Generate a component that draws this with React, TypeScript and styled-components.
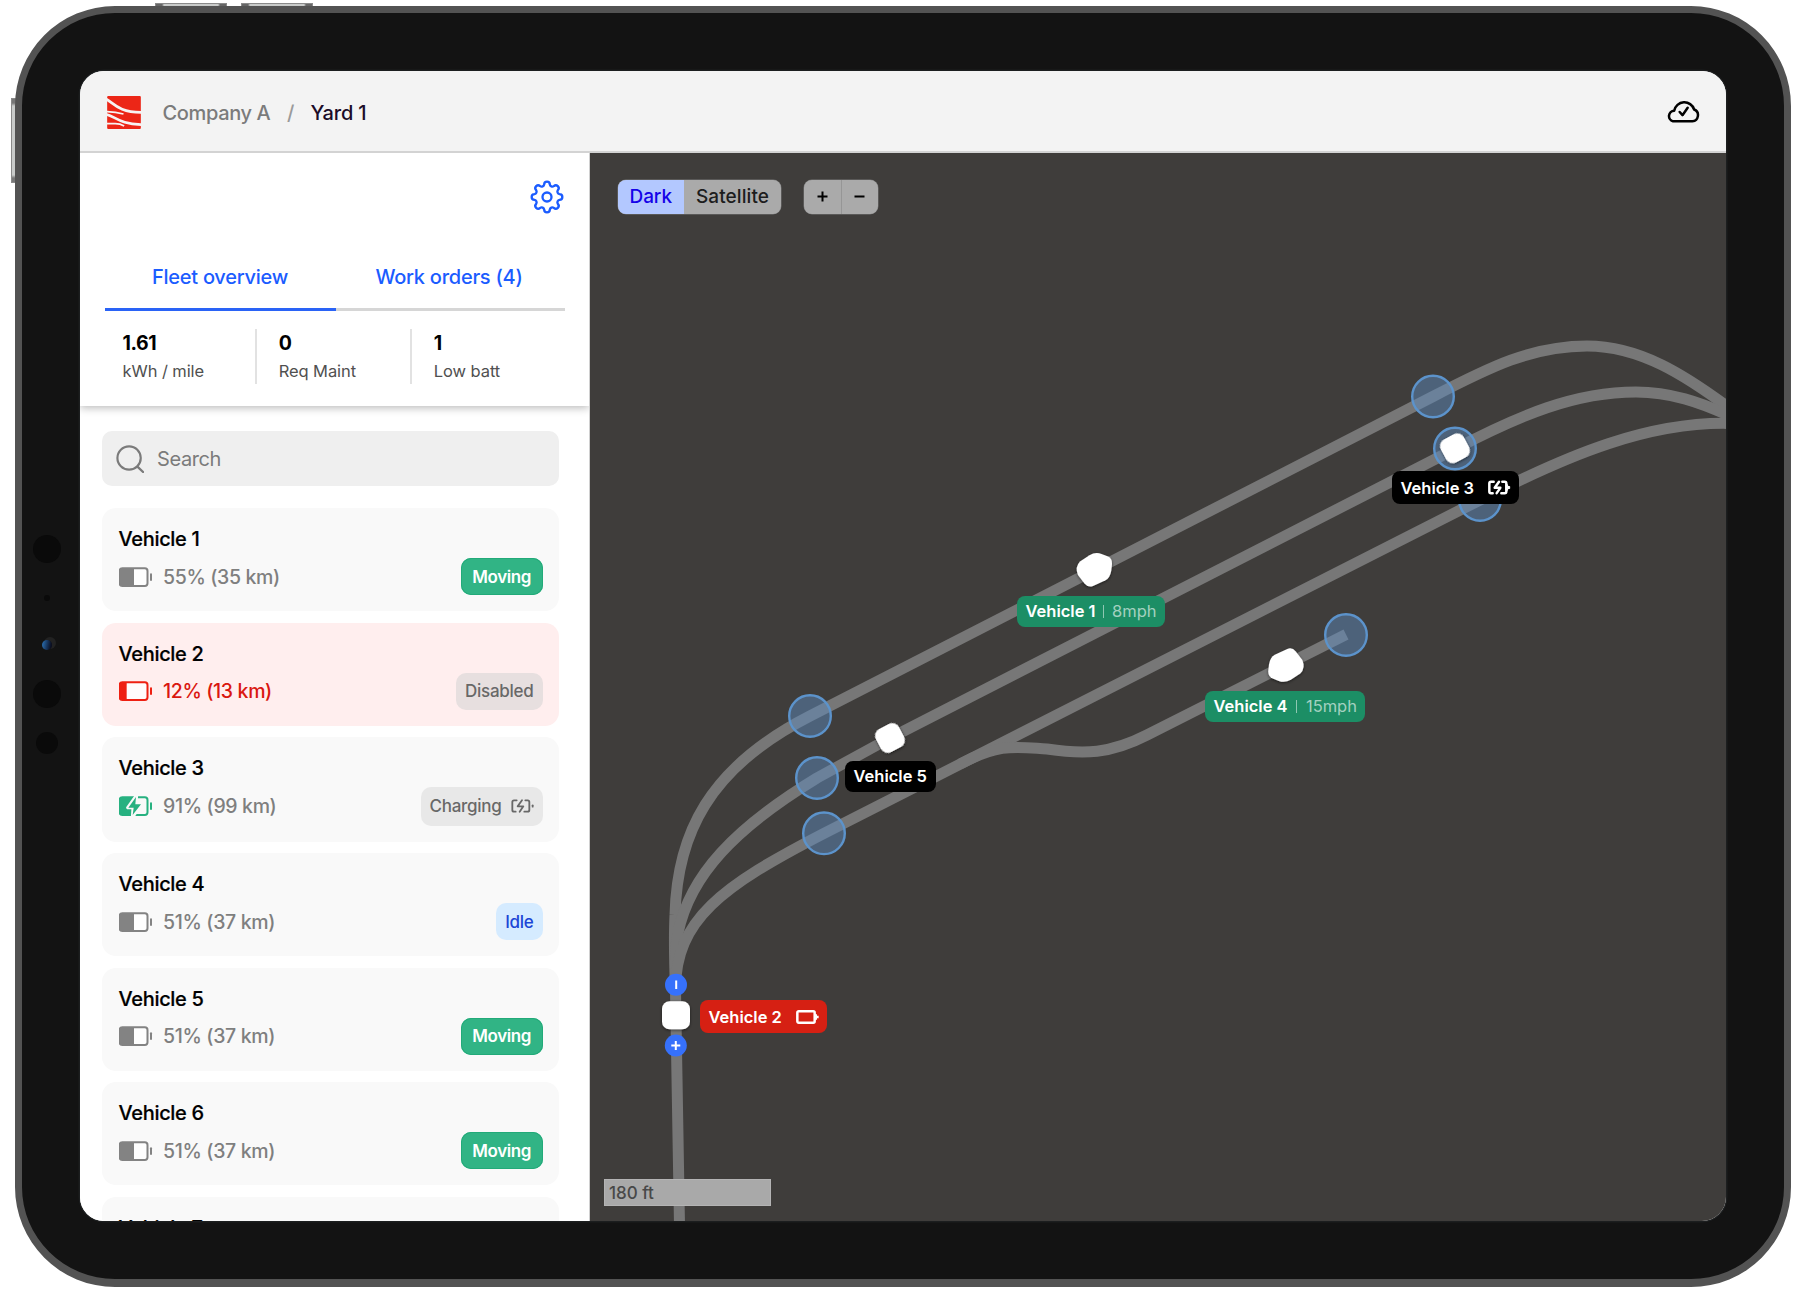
import React from "react";
import styled, { createGlobalStyle } from "styled-components";

const GlobalStyle = createGlobalStyle`
  *, *::before, *::after { box-sizing: border-box; }
  body {
    margin: 0;
    background: #fff;
    font-family: Inter, "Liberation Sans", sans-serif;
    overflow: hidden;
  }
  button { font: inherit; letter-spacing: inherit; border: 0; margin: 0; padding: 0; background: none; }
`;

/* ---------- Tablet ---------- */

const Page = styled.div`
  position: relative;
  width: 1800px;
  height: 1295px;
  padding: 6px 9px 8px 15px;
  overflow: hidden;
`;

const Tablet = styled.div`
  position: relative;
  width: 1776px;
  height: 1281px;
  padding: 58px;
  background: #131313;
  border: 7px solid #535353;
  border-bottom-width: 8px;
  border-radius: 100px;
`;

const Screen = styled.div`
  display: flex;
  flex-direction: column;
  width: 1646px;
  height: 1150px;
  border-radius: 24px;
  overflow: hidden;
  background: #fff;
  box-shadow: 0 0 0 1.5px #1c1e1f;
`;

const SideKey = styled.div<{ $x: number; $y: number; $w: number; $h: number }>`
  position: absolute;
  left: ${(p) => p.$x}px;
  top: ${(p) => p.$y}px;
  width: ${(p) => p.$w}px;
  height: ${(p) => p.$h}px;
  border: 1px solid #8a8a8a;
  background: ${(p) =>
    p.$w > p.$h
      ? "linear-gradient(90deg, #666 0 6px, #c9cbca 8px calc(100% - 8px), #666 calc(100% - 6px))"
      : "linear-gradient(#777 0 4px, #c9cbca 7px calc(100% - 7px), #777 calc(100% - 4px))"};
`;

const Lens = styled.div<{ $y: number; $size: number; $blue?: boolean }>`
  position: absolute;
  left: ${(p) => 24.5 - p.$size / 2}px;
  top: ${(p) => p.$y - p.$size / 2}px;
  width: ${(p) => p.$size}px;
  height: ${(p) => p.$size}px;
  border-radius: 50%;
  background: ${(p) =>
    p.$blue ? "linear-gradient(100deg, #2868a8 10%, #17365f 50%, #0b0f22 85%)" : "#0a0a0a"};
  ${(p) => p.$blue && "box-shadow: 3px -2px 0 1px #222;"}
`;

/* ---------- Top bar ---------- */

const TopBar = styled.header`
  display: flex;
  align-items: center;
  flex: none;
  height: 82px;
  padding: 2px 26px 0 27px;
  background: #f3f3f3;
  border-bottom: 2px solid #d3d3d3;
`;

const Crumbs = styled.nav`
  display: flex;
  align-items: center;
  margin: 1px 0 0 21.5px;
  gap: 16.5px;
  font-size: 20px;
  font-weight: 500;
  line-height: 24px;
  letter-spacing: -0.36px;
  color: #7b7b7b;
`;

const Slash = styled.span`
  color: #9a9a9a;
`;

const Current = styled.span`
  color: #1c0c28;
  letter-spacing: -0.2px;
`;

const Push = styled.div`
  margin: -2px 0 0 auto;
  display: flex;
`;

/* ---------- Sidebar ---------- */

const Body = styled.div`
  display: flex;
  flex: 1;
  min-height: 0;
`;

const Sidebar = styled.aside`
  display: flex;
  flex-direction: column;
  flex: none;
  width: 510px;
  background: #fff;
  border-right: 1px solid #d0d0d0;
  overflow: hidden;
`;

const Summary = styled.section`
  flex: none;
  height: 253px;
  padding: 26.5px 24px 0 25px;
  box-shadow: 0 2px 8px rgba(0, 0, 0, 0.27);
`;

const Settings = styled.button`
  display: flex;
  margin: 0 1.5px 0 auto;
  width: 34px;
  height: 34px;
`;

const Tabs = styled.div`
  display: flex;
  margin-top: 39.5px;
`;

const Tab = styled.button<{ $active?: boolean }>`
  flex: ${(p) => (p.$active ? "0 0 231px" : "1")};
  height: 58px;
  padding: 0 ${(p) => (p.$active ? 1 : 3)}px 7px 0;
  color: #1b5cff;
  font-size: 20px;
  font-weight: 500;
  letter-spacing: -0.25px;
  border-bottom: 3px solid ${(p) => (p.$active ? "#2a63f6" : "#d6d6d6")};
`;

const Stats = styled.dl`
  display: flex;
  margin: 18px 0 0;
`;

const Stat = styled.div`
  display: flex;
  flex-direction: column;
  width: 156.5px;
  height: 55px;
  padding: 3px 0 0 22px;
  &:first-child {
    width: 151px;
    padding-left: 17.5px;
  }
  & + & {
    border-left: 2px solid #e2e2e2;
  }
`;

const StatValue = styled.dd`
  margin: 0;
  order: 0;
  font-size: 19.5px;
  font-weight: 700;
  line-height: 23px;
  letter-spacing: -0.4px;
  color: #000;
`;

const StatLabel = styled.dt`
  order: 1;
  margin-top: 6px;
  font-size: 16.5px;
  line-height: 20px;
  letter-spacing: -0.08px;
  color: #505050;
`;

const List = styled.div`
  display: flex;
  flex-direction: column;
  flex: 1;
  min-height: 0;
  padding: 25px 30px 0 22px;
  overflow: hidden;
`;

const SearchBox = styled.div`
  display: flex;
  align-items: center;
  flex: none;
  height: 55px;
  margin-bottom: 22px;
  padding-left: 13.5px;
  gap: 13px;
  border-radius: 10px;
  background: #efefef;
  color: #7b7b7b;
  font-size: 20px;
  letter-spacing: -0.4px;
`;

const Card = styled.article<{ $alert?: boolean }>`
  flex: none;
  padding: 17px 16.5px 16px;
  margin-bottom: 11.5px;
  border-radius: 14px;
  background: ${(p) => (p.$alert ? "#ffeeee" : "#f9f9f9")};
`;

const CardTitle = styled.h3`
  margin: 0;
  font-size: 20px;
  font-weight: 500;
  line-height: 28px;
  height: 33px;
  color: #000;
  letter-spacing: -0.32px;
  -webkit-text-stroke: 0.2px #000;
`;

const CardRow = styled.div`
  display: flex;
  align-items: center;
  min-height: 37px;
`;

const Charge = styled.span<{ $color: string }>`
  margin-left: 10.5px;
  font-size: 19.5px;
  font-weight: 500;
  letter-spacing: -0.35px;
  color: ${(p) => p.$color};
`;

const tones = {
  green: { bg: "#31b485", fg: "#ffffff", edge: "#22aa79", pad: 11.5 },
  grey: { bg: "#e8e8e8", fg: "#686868", edge: "transparent", pad: 9 },
  muted: { bg: "#e7dfdf", fg: "#686868", edge: "transparent", pad: 9 },
  blue: { bg: "#d5ebff", fg: "#1c46d6", edge: "transparent", pad: 9 },
};
type Tone = keyof typeof tones;

const Badge = styled.span<{ $tone: Tone; $tall?: boolean }>`
  display: flex;
  align-items: center;
  gap: 9px;
  margin-left: auto;
  height: ${(p) => (p.$tall ? 38.5 : 37)}px;
  padding: 0 ${(p) => tones[p.$tone].pad}px;
  border-radius: 10px;
  background: ${(p) => tones[p.$tone].bg};
  box-shadow: inset 0 0 0 1px ${(p) => tones[p.$tone].edge};
  color: ${(p) => tones[p.$tone].fg};
  font-size: 17px;
  font-weight: ${(p) => (p.$tone === "green" ? 600 : 500)};
  letter-spacing: ${(p) => (p.$tone === "green" ? -0.4 : -0.28)}px;
`;

/* ---------- Map ---------- */

const MapArea = styled.main`
  position: relative;
  flex: 1;
  background: #3f3d3b;
  overflow: hidden;
`;

const Tracks = styled.svg`
  display: block;
  width: 1136px;
  height: 1068px;
`;

const Controls = styled.div`
  position: absolute;
  left: 27.5px;
  top: 26.5px;
  display: flex;
  gap: 22.5px;
`;

const Segments = styled.div`
  display: flex;
  height: 34.5px;
  border-radius: 8px;
  overflow: hidden;
  background: #aaa;
  box-shadow: 0 0 0 0.5px #777;
`;

const Segment = styled.button<{ $active?: boolean; $w: number }>`
  width: ${(p) => p.$w}px;
  font-size: 19px;
  font-weight: 500;
  letter-spacing: ${(p) => (p.$active ? -0.1 : 0.1)}px;
  color: ${(p) => (p.$active ? "#1503e8" : "#1d1d1d")};
  background: ${(p) => (p.$active ? "#b3c8ff" : "transparent")};
`;

const Zoom = styled.button`
  display: flex;
  align-items: center;
  justify-content: center;
  width: 37px;
  & + & {
    border-left: 1px solid #969696;
    width: 37px;
  }
`;

const Tag = styled.div<{ $x: number; $y: number; $w: number; $h: number; $bg: string }>`
  position: absolute;
  left: ${(p) => p.$x - 590}px;
  top: ${(p) => p.$y - 153}px;
  width: ${(p) => p.$w}px;
  height: ${(p) => p.$h}px;
  padding: 0 8px 0 8.5px;
  display: flex;
  align-items: center;
  justify-content: space-between;
  border-radius: 8px;
  background: ${(p) => p.$bg};
  color: #fff;
  font-size: 16.5px;
  font-weight: 600;
  white-space: nowrap;
`;

const Bar = styled.i`
  width: 1px;
  height: 13px;
  background: rgba(255, 255, 255, 0.5);
`;

const Speed = styled.span`
  font-weight: 400;
  color: rgba(255, 255, 255, 0.6);
`;

const ScaleBar = styled.div`
  position: absolute;
  left: 13.5px;
  top: 1026px;
  width: 167px;
  height: 26.5px;
  padding-left: 5.5px;
  line-height: 28px;
  background: #a9a9a9;
  box-shadow: inset 0 0 0 1px #b4b4b4;
  color: #484848;
  font-size: 17px;
  font-weight: 500;
`;

/* ---------- Icons ---------- */

const Logo = () => (
  <svg width="34" height="33" viewBox="321 288 101 99">
    <rect x="321" y="288" width="101" height="99" rx="3" fill="#ec2617" />
    <g fill="none" stroke="#f7f3f3" strokeWidth="8">
      <path d="M317 297C340 307 352 337 425 337" />
      <path d="M317 343C346 349 357 373 425 374" />
      <path d="M317 335Q345 335 370 342" strokeWidth="5" />
      <path d="M317 371H345Q360 371 372 378" strokeWidth="5" />
    </g>
  </svg>
);

const CloudCheck = () => (
  <svg width="34" height="26" viewBox="502 297 102 78" fill="none" stroke="#000">
    <path
      d="M523 367H581A18.5 18.5 0 0 0 586.500 331.500A31 31 0 0 0 526.500 335A16.300 16.300 0 0 0 523 367Z"
      strokeWidth="7.500"
      strokeLinejoin="round"
    />
    <path d="M543 339L551.500 348.500L567 326.500" strokeWidth="7.500" strokeLinecap="round" strokeLinejoin="round" />
  </svg>
);

const gearOutline = (() => {
  const at = (deg: number, x: number, y: number) => {
    const a = (deg * Math.PI) / 180;
    return `${(x * Math.cos(a) - y * Math.sin(a)).toFixed(2)} ${(x * Math.sin(a) + y * Math.cos(a)).toFixed(2)}`;
  };
  let d = `M${at(0, 37.5, -8.5)}`;
  for (let i = 0; i < 8; i++) {
    d += `A8.500 8.500 0 0 1 ${at(i * 45, 37.5, 8.5)}A7.800 7.800 0 0 0 ${at((i + 1) * 45, 37.5, -8.5)}`;
  }
  return d + "Z";
})();

const Gear = () => (
  <svg width="34" height="34" viewBox="-51 -51 102 102" fill="none" stroke="#1b5cff" strokeWidth="7">
    <path d={gearOutline} />
    <circle r="13.500" />
  </svg>
);

const Magnifier = () => (
  <svg width="28.500" height="28" viewBox="0 0 85 84" fill="none" stroke="#7b7b7b" strokeWidth="6.500">
    <circle cx="39" cy="39" r="35" />
    <path d="M64 65L81 81" strokeWidth="7" strokeLinecap="round" />
  </svg>
);

const Battery = ({ fill, color }: { fill: number; color: string }) => (
  <svg width="34" height="20" viewBox="1 0 102 60" stroke={color} fill="none">
    <rect x="3" y="4" width="83.500" height="53" rx="8" strokeWidth="6" fill="#fff" fillOpacity="0.8" />
    <path d={`M${fill} 3H10Q3 3 3 10V51Q3 58 10 58H${fill}Z`} fill={color} stroke="none" />
    <path d="M97 22V39" strokeWidth="6" strokeLinecap="round" />
  </svg>
);

const BatteryCharging = ({ color }: { color: string }) => (
  <svg width="34" height="20" viewBox="1 0 102 60" stroke={color} fill="none">
    <rect x="3" y="4" width="83.500" height="53" rx="8" strokeWidth="6" />
    <path d="M45 3H10Q3 3 3 10V51Q3 58 10 58H45Z" fill={color} stroke="none" />
    <path d="M54 -3L27 35H43L41 65L69 24H52Z" fill="#fff" stroke="#f9f9f9" strokeWidth="9" strokeLinejoin="round" />
    <path d="M52 3L29 35H45L42 57L67 25H50Z" fill={color} stroke="none" />
    <path d="M97 22V39" strokeWidth="6" strokeLinecap="round" />
  </svg>
);

const BoltBattery = ({ bold }: { bold?: boolean }) => (
  <svg
    width="23"
    height={bold ? 15 : 14}
    viewBox="0 0 69 42"
    fill="none"
    stroke="currentColor"
    strokeWidth={bold ? 7.5 : 5.5}
    strokeLinejoin="round"
    strokeLinecap="round"
  >
    <path d="M17 4H9Q4 4 4 9V33Q4 38 9 38H14" />
    <path d="M43 4H50Q55 4 55 9V33Q55 38 50 38H40" />
    <path d="M33 4L20 22H37L26 38" strokeWidth={bold ? 7.5 : 5.5} />
    {bold ? <path d="M55 13H59V18H65V24H59V29H55Z" fill="currentColor" strokeWidth="3" /> : <path d="M65 19V23" />}
  </svg>
);

const EmptyBattery = () => (
  <svg width="23" height="14" viewBox="0 0 69 42" fill="none" stroke="#fff" strokeWidth="7.500">
    <rect x="4" y="4" width="52" height="34" rx="4" />
    <path d="M57 13H63V17H68V25H63V29H57Z" fill="#fff" stroke="none" />
  </svg>
);

/* ---------- Data ---------- */

type Vehicle = {
  name: string;
  charge: string;
  status: string;
  tone: Tone;
  alert?: boolean;
  charging?: boolean;
};

const vehicles: Vehicle[] = [
  { name: "Vehicle 1", charge: "55% (35 km)", status: "Moving", tone: "green" },
  { name: "Vehicle 2", charge: "12% (13 km)", status: "Disabled", tone: "muted", alert: true },
  { name: "Vehicle 3", charge: "91% (99 km)", status: "Charging", tone: "grey", charging: true },
  { name: "Vehicle 4", charge: "51% (37 km)", status: "Idle", tone: "blue" },
  { name: "Vehicle 5", charge: "51% (37 km)", status: "Moving", tone: "green" },
  { name: "Vehicle 6", charge: "51% (37 km)", status: "Moving", tone: "green" },
  { name: "Vehicle 7", charge: "51% (37 km)", status: "Moving", tone: "green" },
];

const stats = [
  ["1.61", "kWh / mile"],
  ["0", "Req Maint"],
  ["1", "Low batt"],
];

const stops = [
  [1433, 396.5],
  [1455, 448.5],
  [1480, 500],
  [810, 716],
  [817, 778],
  [824, 833.3],
  [1346, 635],
];

const tracks = [
  "M679.500 1225L675.500 990C674 950 674 935 675 915C677 835 708 768 810 716L1433 396.500C1490 367 1532 346 1587 346C1640 346 1685 375 1732 410",
  "M675.500 990C676 960 674 950 678 933C690 875 735 828 817 778L890 738L1455 449C1520 415 1575 392 1636 392C1670 392 1700 402 1732 417",
  "M675.500 990C675 920 722 886 824 833.300L1480 500C1570 454 1650 421 1732 423.500",
  "M960 764C1000 743 1015 747 1047 749C1084 754.500 1110 754 1147 735L1346 634.500",
];

const Cart = ({ x, y, turn = 0, size = 26 }: { x: number; y: number; turn?: number; size?: number }) => (
  <rect
    x={-size / 2}
    y={-size / 2}
    width={size}
    height={size}
    rx="7.500"
    fill="#fff"
    filter="url(#lift)"
    transform={`translate(${x} ${y}) rotate(${turn})`}
  />
);

const MovingCart = ({ x, y, turn = 0 }: { x: number; y: number; turn?: number }) => (
  <g filter="url(#lift)">
    <path
      d="M-4.500 -14.800Q1.500 -18.300 7.500 -16L13.500 -13.700Q18.500 -11.500 18 -6L17.300 0.500Q16 8 11.500 10.200L-1 16Q-6 17.800 -9.500 13.500L-16 5Q-19.500 -3 -14 -8.500Z"
      transform={`translate(${x} ${y}) rotate(${turn})`}
      fill="#fff"
    />
  </g>
);

export default function App() {
  return (
    <Page>
      <GlobalStyle />
      <SideKey $x={155} $y={3} $w={72} $h={6} />
      <SideKey $x={241} $y={3} $w={72} $h={6} />
      <SideKey $x={11} $y={98} $w={7} $h={85} />
      <Tablet>
        <Lens $y={535.5} $size={28} />
        <Lens $y={584.5} $size={6} />
        <Lens $y={632} $size={10} $blue />
        <Lens $y={681} $size={28} />
        <Lens $y={730} $size={22} />
        <Screen>
          <TopBar>
            <Logo />
            <Crumbs>
              <span>Company A</span>
              <Slash>/</Slash>
              <Current>Yard 1</Current>
            </Crumbs>
            <Push>
              <CloudCheck />
            </Push>
          </TopBar>
          <Body>
            <Sidebar>
              <Summary>
                <Settings aria-label="Settings">
                  <Gear />
                </Settings>
                <Tabs>
                  <Tab $active>Fleet overview</Tab>
                  <Tab>Work orders (4)</Tab>
                </Tabs>
                <Stats>
                  {stats.map(([value, label]) => (
                    <Stat key={label}>
                      <StatLabel>{label}</StatLabel>
                      <StatValue>{value}</StatValue>
                    </Stat>
                  ))}
                </Stats>
              </Summary>
              <List>
                <SearchBox>
                  <Magnifier />
                  <span>Search</span>
                </SearchBox>
                {vehicles.map((v) => (
                  <Card key={v.name} $alert={v.alert}>
                    <CardTitle>{v.name}</CardTitle>
                    <CardRow>
                      {v.charging ? (
                        <BatteryCharging color="#27b180" />
                      ) : (
                        <Battery fill={v.alert ? 24 : 46} color={v.alert ? "#ee2012" : "#838383"} />
                      )}
                      <Charge $color={v.alert ? "#da1710" : "#7f7f7f"}>{v.charge}</Charge>
                      <Badge $tone={v.tone} $tall={v.charging}>
                        {v.status}
                        {v.charging && <BoltBattery />}
                      </Badge>
                    </CardRow>
                  </Card>
                ))}
              </List>
            </Sidebar>
            <MapArea>
              <Tracks viewBox="590 153 1136 1068">
                <defs>
                  <filter id="lift" x="-30%" y="-30%" width="160%" height="160%">
                    <feDropShadow dx="0" dy="1" stdDeviation="1.500" floodOpacity="0.55" />
                  </filter>
                </defs>
                <g fill="none" stroke="#777" strokeWidth="11">
                  {tracks.map((d) => (
                    <path key={d} d={d} />
                  ))}
                </g>
                <g fill="rgba(94,140,192,0.48)" stroke="#5c93cb" strokeWidth="2.400">
                  {stops.map(([x, y]) => (
                    <circle key={`${x}-${y}`} cx={x} cy={y} r="20.800" />
                  ))}
                </g>
                <Cart x={1455} y={448.3} turn={-28} />
                <Cart x={890} y={738} turn={-28} />
                <Cart x={676} y={1015.3} size={28} />
                <MovingCart x={1094} y={570} />
                <MovingCart x={1286.3} y={664.9} turn={180} />
                <circle cx="676" cy="984.800" r="11" fill="#3671fb" />
                <circle cx="675.800" cy="1045.500" r="11" fill="#3671fb" />
                <path d="M676.200 980.500V989M671.300 1045.500H680.300M675.800 1041V1050" stroke="#fff" strokeWidth="2" />
              </Tracks>
              <Controls>
                <Segments>
                  <Segment $active $w={66.5}>
                    Dark
                  </Segment>
                  <Segment $w={97}>Satellite</Segment>
                </Segments>
                <Segments>
                  <Zoom aria-label="Zoom in">
                    <svg width="11" height="11" stroke="#000" strokeWidth="2">
                      <path d="M0.500 5.500H10.500M5.500 0.500V10.500" />
                    </svg>
                  </Zoom>
                  <Zoom aria-label="Zoom out">
                    <svg width="11" height="11" stroke="#000" strokeWidth="2">
                      <path d="M0.500 5.500H10.500" />
                    </svg>
                  </Zoom>
                </Segments>
              </Controls>
              <Tag $x={1392} $y={471} $w={127} $h={33} $bg="#000">
                Vehicle 3<BoltBattery bold />
              </Tag>
              <Tag $x={1017} $y={595.5} $w={147.5} $h={31.5} $bg="#1c8e65">
                Vehicle 1<Bar />
                <Speed>8mph</Speed>
              </Tag>
              <Tag $x={1205} $y={690.5} $w={160} $h={31.5} $bg="#1c8e65">
                Vehicle 4<Bar />
                <Speed>15mph</Speed>
              </Tag>
              <Tag $x={845} $y={760.5} $w={91} $h={31.5} $bg="#000">
                Vehicle 5
              </Tag>
              <Tag $x={700} $y={1000} $w={127} $h={33} $bg="#d62013">
                Vehicle 2<EmptyBattery />
              </Tag>
              <ScaleBar>180 ft</ScaleBar>
            </MapArea>
          </Body>
        </Screen>
      </Tablet>
    </Page>
  );
}
